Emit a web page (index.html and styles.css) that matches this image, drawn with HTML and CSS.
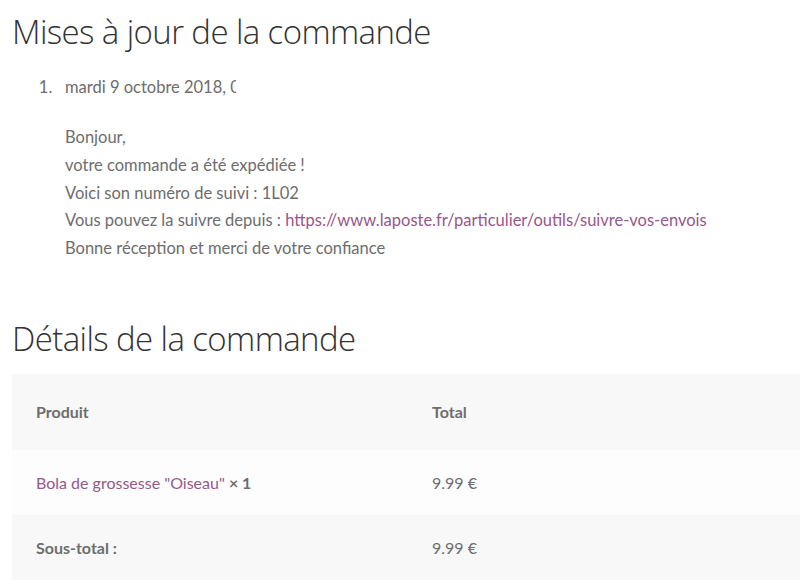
FILE: index.html
```html
<!DOCTYPE html>
<html lang="fr">
<head>
  <meta charset="UTF-8">
  <meta name="viewport" content="width=device-width, initial-scale=1.0">
  <link rel="stylesheet" href="styles.css">
  <title>Commande</title>
</head>
<body>
  <div class="order">
    <h2 class="title">Mises à jour de la commande</h2>
    <ol class="notes">
      <li>
        <p class="note-date"><span class="clip">mardi 9 octobre 2018, 09:41</span></p>
        <div class="note-text">
          <p>Bonjour,<br>
          votre commande a été expédiée !<br>
          Voici son numéro de suivi : 1L02<br>
          Vous pouvez la suivre depuis : <a href="#">https://www.laposte.fr/particulier/outils/suivre-vos-envois</a><br>
          Bonne réception et merci de votre confiance</p>
        </div>
      </li>
    </ol>

    <h2 class="title details-title">Détails de la commande</h2>
    <table class="details">
      <thead>
        <tr>
          <th class="col-product">Produit</th>
          <th>Total</th>
        </tr>
      </thead>
      <tbody>
        <tr>
          <td class="col-product"><a href="#">Bola de grossesse "Oiseau"</a> <strong>× 1</strong></td>
          <td>9.99 €</td>
        </tr>
      </tbody>
      <tfoot>
        <tr>
          <th class="col-product">Sous-total :</th>
          <td>9.99 €</td>
        </tr>
      </tfoot>
    </table>
  </div>
</body>
</html>
```

FILE: styles.css
```css
body {
  margin: 0;
  font-family: 'Lato', 'Open Sans', sans-serif;
  color: #6d6d6d;
  background: #fff;
  overflow: hidden;
}

.order {
  padding-left: 12px;
}

a {
  color: #96588a;
  text-decoration: none;
}

.title {
  font-family: 'Open Sans', sans-serif;
  font-weight: 300;
  font-size: 33px;
  color: #333;
  margin: 0;
  padding-top: 9px;
  line-height: 46px;
  letter-spacing: -0.6px;
}

.notes {
  margin: 18px 0 0;
  padding-left: 53px;
  font-size: 16.5px;
}

.notes li::marker {
  content: "1.\00a0\00a0\00a0";
}

.note-date {
  margin: 0;
  line-height: 28px;
}

.clip {
  display: inline-block;
  max-width: 171px;
  overflow: hidden;
  white-space: nowrap;
  vertical-align: top;
}

.note-text p {
  margin: 23px 0 0;
  line-height: 27.8px;
}

.details-title {
  margin-top: 44px;
}

.details {
  margin-top: 12px;
  width: 100%;
  border-collapse: collapse;
  font-size: 16px;
}

.details th,
.details td {
  text-align: left;
  padding: 0 24px;
}

.details th {
  font-weight: bold;
  color: #6d6d6d;
}

.details .col-product {
  width: 348px;
}

.details thead tr {
  background: #f8f8f8;
  height: 76px;
}

.details tbody tr {
  background: #fdfdfd;
  height: 65px;
}

.details tfoot tr {
  background: #f8f8f8;
  height: 65px;
}

.details strong {
  color: #6d6d6d;
}
```
